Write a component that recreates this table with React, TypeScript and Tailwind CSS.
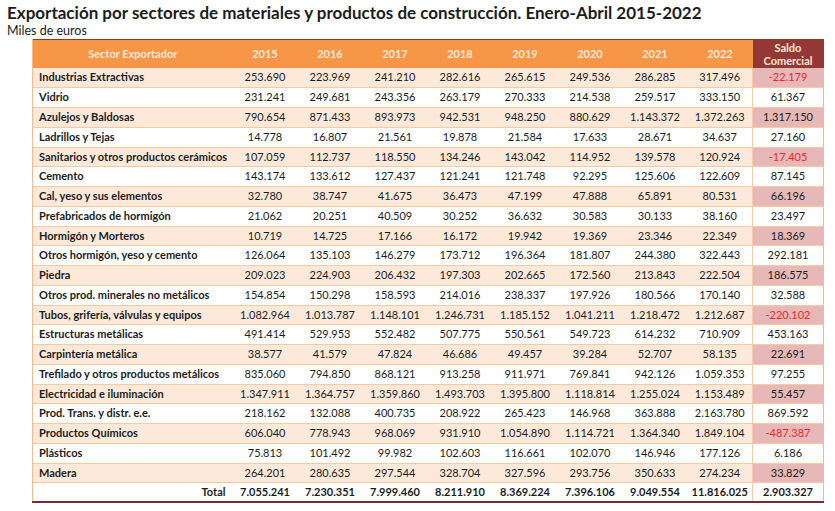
import React from 'react';

const years = ['2015', '2016', '2017', '2018', '2019', '2020', '2021', '2022'];

const rows: string[][] = [
  ['Industrias Extractivas', '253.690', '223.969', '241.210', '282.616', '265.615', '249.536', '286.285', '317.496', '-22.179'],
  ['Vidrio', '231.241', '249.681', '243.356', '263.179', '270.333', '214.538', '259.517', '333.150', '61.367'],
  ['Azulejos y Baldosas', '790.654', '871.433', '893.973', '942.531', '948.250', '880.629', '1.143.372', '1.372.263', '1.317.150'],
  ['Ladrillos y Tejas', '14.778', '16.807', '21.561', '19.878', '21.584', '17.633', '28.671', '34.637', '27.160'],
  ['Sanitarios y otros productos cerámicos', '107.059', '112.737', '118.550', '134.246', '143.042', '114.952', '139.578', '120.924', '-17.405'],
  ['Cemento', '143.174', '133.612', '127.437', '121.241', '121.748', '92.295', '125.606', '122.609', '87.145'],
  ['Cal, yeso y sus elementos', '32.780', '38.747', '41.675', '36.473', '47.199', '47.888', '65.891', '80.531', '66.196'],
  ['Prefabricados de hormigón', '21.062', '20.251', '40.509', '30.252', '36.632', '30.583', '30.133', '38.160', '23.497'],
  ['Hormigón y Morteros', '10.719', '14.725', '17.166', '16.172', '19.942', '19.369', '23.346', '22.349', '18.369'],
  ['Otros hormigón, yeso y cemento', '126.064', '135.103', '146.279', '173.712', '196.364', '181.807', '244.380', '322.443', '292.181'],
  ['Piedra', '209.023', '224.903', '206.432', '197.303', '202.665', '172.560', '213.843', '222.504', '186.575'],
  ['Otros prod. minerales no metálicos', '154.854', '150.298', '158.593', '214.016', '238.337', '197.926', '180.566', '170.140', '32.588'],
  ['Tubos, grifería, válvulas y equipos', '1.082.964', '1.013.787', '1.148.101', '1.246.731', '1.185.152', '1.041.211', '1.218.472', '1.212.687', '-220.102'],
  ['Estructuras metálicas', '491.414', '529.953', '552.482', '507.775', '550.561', '549.723', '614.232', '710.909', '453.163'],
  ['Carpintería metálica', '38.577', '41.579', '47.824', '46.686', '49.457', '39.284', '52.707', '58.135', '22.691'],
  ['Trefilado y otros productos metálicos', '835.060', '794.850', '868.121', '913.258', '911.971', '769.841', '942.126', '1.059.353', '97.255'],
  ['Electricidad e iluminación', '1.347.911', '1.364.757', '1.359.860', '1.493.703', '1.395.800', '1.118.814', '1.255.024', '1.153.489', '55.457'],
  ['Prod. Trans. y distr. e.e.', '218.162', '132.088', '400.735', '208.922', '265.423', '146.968', '363.888', '2.163.780', '869.592'],
  ['Productos Químicos', '606.040', '778.943', '968.069', '931.910', '1.054.890', '1.114.721', '1.364.340', '1.849.104', '-487.387'],
  ['Plásticos', '75.813', '101.492', '99.982', '102.603', '116.661', '102.070', '146.946', '177.126', '6.186'],
  ['Madera', '264.201', '280.635', '297.544', '328.704', '327.596', '293.756', '350.633', '274.234', '33.829'],
];

const totals = ['7.055.241', '7.230.351', '7.999.460', '8.211.910', '8.369.224', '7.396.106', '9.049.554', '11.816.025', '2.903.327'];

export default function App() {
  return (
    <div className="w-[835px] h-[511px] bg-white text-[#1c1c1c] font-['Lato',sans-serif] overflow-hidden">
      {/* Heading */}
      <div className="pl-[7px] pt-[3px]">
        <h1 className="text-[17px] leading-[20px] font-bold">
          Exportación por sectores de materiales y productos de construcción. Enero-Abril 2015-2022
        </h1>
        <p className="text-[12.5px] leading-[15px]">Miles de euros</p>
      </div>

      {/* Table */}
      <table className="ml-[32px] mt-[1px] border-collapse table-fixed text-[11px]">
        <colgroup>
          <col className="w-[200px]" />
          {years.map((y) => (
            <col key={y} className="w-[65px]" />
          ))}
          <col className="w-[71px]" />
        </colgroup>
        <thead>
          <tr className="h-[28.5px] border-t border-t-[#8a3d1c]">
            <th className="bg-[#f79646] text-[#fde9d9] font-bold text-center border-l border-l-[#f6b98a]">
              Sector Exportador
            </th>
            {years.map((y) => (
              <th key={y} className="bg-[#f79646] text-[#fde9d9] font-bold text-center">
                {y}
              </th>
            ))}
            <th className="bg-[#953735] text-[#fde9d9] font-bold text-center leading-[13px]">
              Saldo
              <br />
              Comercial
            </th>
          </tr>
        </thead>
        <tbody>
          {rows.map((r, i) => {
            const shaded = i % 2 === 0;
            const saldo = r[9];
            const negative = saldo.startsWith('-');
            return (
              <tr
                key={r[0]}
                className={`h-[19.75px] border-b border-b-[#fac9a1] ${shaded ? 'bg-[#fde9d9]' : 'bg-white'}`}
              >
                <td className="pl-[6px] font-bold whitespace-nowrap border-l border-l-[#f6b98a]">{r[0]}</td>
                {r.slice(1, 9).map((v, j) => (
                  <td key={j} className="text-center">
                    {v}
                  </td>
                ))}
                <td
                  className={`text-center border-l border-l-[#fac9a1] border-r border-r-[#f6b98a] ${
                    shaded ? 'bg-[#e6b9b8]' : 'bg-white'
                  } ${negative ? 'text-[#f0242b]' : ''}`}
                >
                  {saldo}
                </td>
              </tr>
            );
          })}
          <tr className="h-[19.5px] bg-white font-bold border-b-2 border-b-[#7b2a2e]">
            <td className="text-right pr-[7px] border-l border-l-[#f6b98a]">Total</td>
            {totals.slice(0, 8).map((v, j) => (
              <td key={j} className="text-center">
                {v}
              </td>
            ))}
            <td className="text-center border-l border-l-[#fac9a1] border-r border-r-[#f6b98a]">{totals[8]}</td>
          </tr>
        </tbody>
      </table>
    </div>
  );
}
